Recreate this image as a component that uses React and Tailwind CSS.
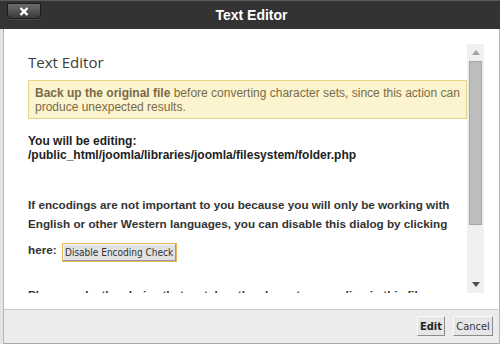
import React from "react";

const Scrollbar = () => (
  <div className="w-[17px] h-[249px] bg-[#f0f0f0] flex flex-col items-center">
    {/* up arrow */}
    <div className="h-[17px] flex items-center justify-center">
      <svg width="8" height="5" viewBox="0 0 8 5">
        <path d="M4 0 L8 5 L0 5 Z" fill="#a3a3a3" />
      </svg>
    </div>
    {/* thumb */}
    <div className="w-[13px] h-[164px] bg-[#bdbdbd] border border-[#a6a6a6]" />
    <div className="flex-1" />
    {/* down arrow */}
    <div className="h-[17px] flex items-center justify-center">
      <svg width="8" height="5" viewBox="0 0 8 5">
        <path d="M0 0 L8 0 L4 5 Z" fill="#505050" />
      </svg>
    </div>
  </div>
);

const App = () => {
  return (
    <div className="w-[500px] h-[344px] bg-[#e4e4e4] font-['Liberation_Sans',Arial,sans-serif] overflow-hidden">
      {/* Header */}
      <div className="h-[29px] border-t border-[#5a5a5a] bg-[#333333] grid grid-cols-[1fr_auto_1fr] items-center">
        <div className="self-start pl-[7px] pt-[2px]">
          <button
            type="button"
            className="w-[34px] h-[16px] rounded-b-[4px] border border-[#1c1c1c] bg-gradient-to-b from-[#6e6e6e] to-[#3a3a3a] flex items-center justify-center shadow-[0_1px_0_#3f4d52]"
          >
            <svg width="10" height="9" viewBox="0 0 10 9">
              <path d="M1.5 1 L8.5 8 M8.5 1 L1.5 8" stroke="white" strokeWidth="2.4" />
            </svg>
          </button>
        </div>
        <div className="text-white font-bold text-[14px] leading-none pl-[3px]">Text Editor</div>
        <div />
      </div>

      {/* Body */}
      <div className="ml-[3px] h-[280px] bg-white border-l border-r border-[#b5b5b5] flex pt-[15px]">
        <div className="w-[463px] h-[249px] overflow-hidden pl-[24px]">
          <div className="w-[439px]">
            <h2 className="mt-[8px] font-['Open_Sans',sans-serif] text-[15px] leading-[20px] text-[#3c3c3c]">
              Text Editor
            </h2>

            <div className="mt-[8px] border border-[#e6d68a] bg-[#fcf4cf] px-[6px] pt-[5px] pb-[4px] text-[12px] leading-[14px] text-[#7a6a48]">
              <b>Back up the original file</b> before converting character sets, since this action can
              produce unexpected results.
            </div>

            <div className="mt-[15px] text-[12px] leading-[14px] font-bold text-[#222]">
              You will be editing:
              <br />
              /public_html/joomla/libraries/joomla/filesystem/folder.php
            </div>

            <div className="mt-[33px] text-[11.7px] leading-[19px] font-bold text-[#333]">
              If encodings are not important to you because you will only be working with
              <br />
              English or other Western languages, you can disable this dialog by clicking
              <div className="flex items-start gap-[5px] mt-[6px]">
                <span className="pt-[1px]">here:</span>
                <button
                  type="button"
                  className="mt-[4px] h-[19px] w-[115px] border border-[#eab65a] bg-[#e2e2e2] shadow-[inset_-1px_-1px_0_#9a9a9a,inset_1px_1px_0_#f6f6f6] font-['DejaVu_Sans_Condensed','DejaVu_Sans',sans-serif] font-normal text-[10px] text-[#333] leading-none"
                >
                  Disable Encoding Check
                </button>
              </div>
            </div>

            <div className="mt-[23px] text-[11.7px] leading-[19px] font-bold text-[#333]">
              Please make the choice that matches the character encoding in this file.
            </div>
          </div>
        </div>
        <Scrollbar />
      </div>

      {/* Footer */}
      <div className="ml-[3px] h-[35px] bg-[#ececec] border-t border-l border-r border-b border-t-[#c8c8c8] border-l-[#b5b5b5] border-r-[#b5b5b5] border-b-[#a8a8a8] flex items-center justify-end gap-[8px] pr-[6px] pb-[1px]">
        <button
          type="button"
          className="w-[28px] h-[20px] bg-[#e6e6e6] border border-t-[#fafafa] border-l-[#fafafa] border-r-[#8c8c8c] border-b-[#8c8c8c] font-['DejaVu_Sans_Condensed','DejaVu_Sans',sans-serif] font-bold text-[11px] text-[#222] leading-none"
        >
          Edit
        </button>
        <button
          type="button"
          className="w-[40px] h-[20px] bg-[#e6e6e6] border border-t-[#fafafa] border-l-[#fafafa] border-r-[#8c8c8c] border-b-[#8c8c8c] font-['DejaVu_Sans_Condensed','DejaVu_Sans',sans-serif] text-[11px] text-[#333] leading-none"
        >
          Cancel
        </button>
      </div>
    </div>
  );
};

export default App;
